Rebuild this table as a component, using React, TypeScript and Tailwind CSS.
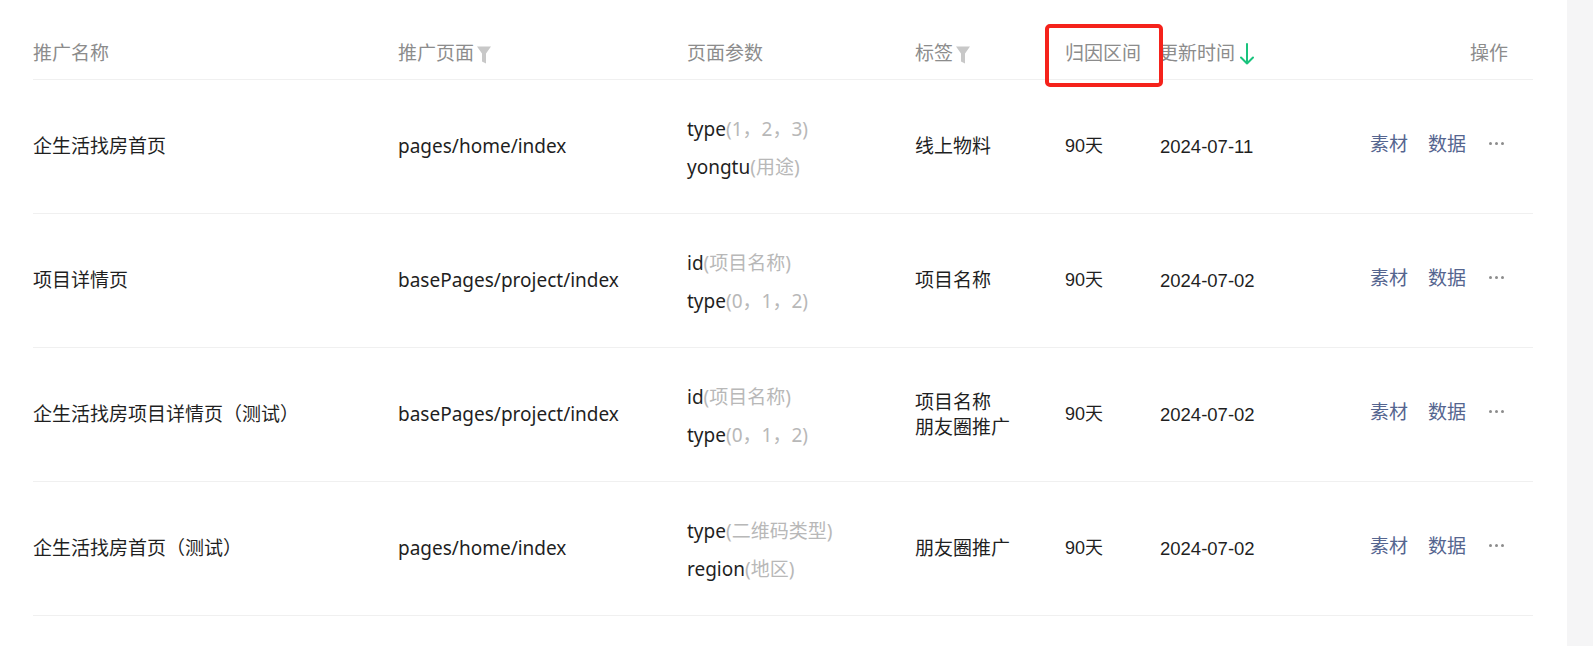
import React from "react";

const cols = "grid grid-cols-[365px_289px_228px_150px_95px_140px_1fr]";
const base = { fontFamily: '"Noto Sans", "Noto Sans CJK SC", sans-serif' } as React.CSSProperties;
const arial = { fontFamily: '"Liberation Sans", "Noto Sans CJK SC", sans-serif' } as React.CSSProperties;

function Funnel() {
  return (
    <svg width="14" height="18" viewBox="0 0 14 18" className="ml-[3px] mt-[4px]">
      <path d="M0 0.5 H14 L9 7.5 V17.5 L5 15.5 V7.5 Z" fill="#c8c8c8" />
    </svg>
  );
}

function Arrow() {
  return (
    <svg width="16" height="22" viewBox="0 0 16 22" className="ml-[4px] mt-[2px]">
      <path d="M8 1 V20.5 M2 14.5 L8 20.5 L14 14.5" stroke="#19c37d" strokeWidth="2" fill="none" strokeLinecap="round" strokeLinejoin="round" />
    </svg>
  );
}

type Param = { k: string; v: string };
type Row = { name: string; page: string; params: Param[]; tags: string[]; date: string };

const rows: Row[] = [
  { name: "企生活找房首页", page: "pages/home/index", params: [{ k: "type", v: "(1，2，3)" }, { k: "yongtu", v: "(用途)" }], tags: ["线上物料"], date: "2024-07-11" },
  { name: "项目详情页", page: "basePages/project/index", params: [{ k: "id", v: "(项目名称)" }, { k: "type", v: "(0，1，2)" }], tags: ["项目名称"], date: "2024-07-02" },
  { name: "企生活找房项目详情页（测试）", page: "basePages/project/index", params: [{ k: "id", v: "(项目名称)" }, { k: "type", v: "(0，1，2)" }], tags: ["项目名称", "朋友圈推广"], date: "2024-07-02" },
  { name: "企生活找房首页（测试）", page: "pages/home/index", params: [{ k: "type", v: "(二维码类型)" }, { k: "region", v: "(地区)" }], tags: ["朋友圈推广"], date: "2024-07-02" },
];

export default function App() {
  return (
    <div className="relative flex w-full h-[646px] bg-white overflow-hidden" style={base}>
      <div className="w-[1567px] shrink-0 pl-[33px] pr-[34px] pt-[27px]">
        <div className={`${cols} h-[53px] items-center border-b border-[#f0f0f0] text-[19px] text-[#8c8c8c]`}>
          <div>推广名称</div>
          <div className="flex items-center">推广页面<Funnel /></div>
          <div>页面参数</div>
          <div className="flex items-center">标签<Funnel /></div>
          <div>归因区间</div>
          <div className="flex items-center -ml-[1px]">更新时间<Arrow /></div>
          <div className="text-right pr-[25px]">操作</div>
        </div>
        {rows.map((r, i) => (
          <div key={i} className={`${cols} h-[134px] items-center border-b border-[#f0f0f0] text-[19px] text-[#1f1f1f]`}>
            <div>{r.name}</div>
            <div>{r.page}</div>
            <div className="flex flex-col gap-[12px] pt-[3px]">
              {r.params.map((p, j) => (
                <div key={j} className="leading-[26px]">
                  <span>{p.k}</span>
                  <span className="text-[#b8b8b8]">{p.v}</span>
                </div>
              ))}
            </div>
            <div className="leading-[25px]">
              {r.tags.map((t, j) => (
                <div key={j}>{t}</div>
              ))}
            </div>
            <div style={arial} className="text-[18px]">90天</div>
            <div style={arial} className="text-[18.5px]">{r.date}</div>
            <div className="flex items-center justify-end pr-[29px] text-[#55658f] -mt-[5px]">
              <span>素材</span>
              <span className="ml-[20px]">数据</span>
              <span className="ml-[23px] flex gap-[3px] items-center pb-[2px]">
                <span className="w-[3px] h-[3px] rounded-full bg-[#8c8c8c]" />
                <span className="w-[3px] h-[3px] rounded-full bg-[#8c8c8c]" />
                <span className="w-[3px] h-[3px] rounded-full bg-[#8c8c8c]" />
              </span>
            </div>
          </div>
        ))}
      </div>
      <div className="flex-1 bg-[#f5f5f6]" />
      <div className="absolute left-[1045px] top-[24px] w-[118px] h-[63px] border-4 border-[#f5221b] rounded-[5px]" />
    </div>
  );
}
